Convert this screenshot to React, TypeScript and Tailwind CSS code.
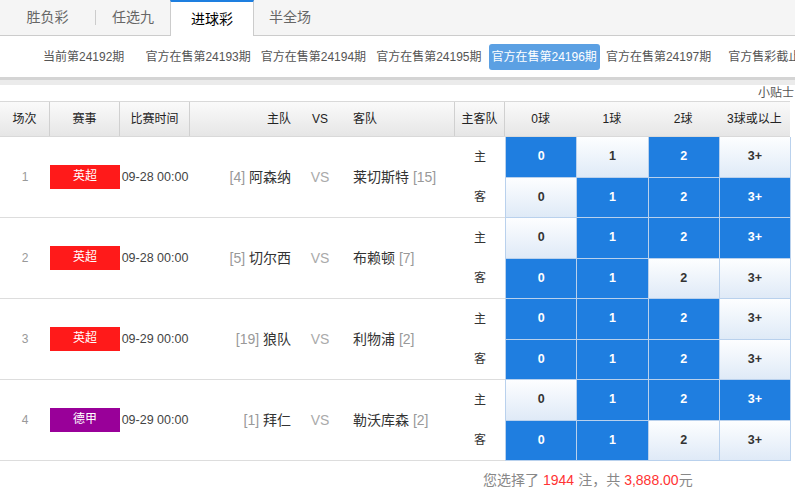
import React from 'react';

type Match = {
  no: number;
  league: string;
  leagueColor: string;
  time: string;
  homeRank: string;
  home: string;
  away: string;
  awayRank: string;
  sel: number[][];
};

const matches: Match[] = [
  { no: 1, league: '英超', leagueColor: 'bg-[#ff1a1a]', time: '09-28 00:00', homeRank: '[4]', home: '阿森纳', away: '莱切斯特', awayRank: '[15]', sel: [[1, 0, 1, 0], [0, 1, 1, 1]] },
  { no: 2, league: '英超', leagueColor: 'bg-[#ff1a1a]', time: '09-28 00:00', homeRank: '[5]', home: '切尔西', away: '布赖顿', awayRank: '[7]', sel: [[0, 1, 1, 1], [1, 1, 0, 0]] },
  { no: 3, league: '英超', leagueColor: 'bg-[#ff1a1a]', time: '09-29 00:00', homeRank: '[19]', home: '狼队', away: '利物浦', awayRank: '[2]', sel: [[1, 1, 1, 0], [1, 1, 1, 0]] },
  { no: 4, league: '德甲', leagueColor: 'bg-[#990099]', time: '09-29 00:00', homeRank: '[1]', home: '拜仁', away: '勒沃库森', awayRank: '[2]', sel: [[0, 1, 1, 1], [1, 1, 0, 0]] },
];

const periods = ['官方在售第24193期', '官方在售第24194期', '官方在售第24195期', '官方在售第24196期', '官方在售第24197期'];
const labels = ['0', '1', '2', '3+'];

const MatchRow: React.FC<{ m: Match }> = ({ m }) => (
  <div className="flex">
    <div className="flex h-[81px] w-[505px] items-center border-b border-[#ddd]">
      <div className="w-[50px] text-center text-[12px] text-[#999]">{m.no}</div>
      <div className={`flex h-[24px] w-[70px] items-center justify-center pb-[2px] text-[12px] text-white ${m.leagueColor}`}>
        {m.league}
      </div>
      <div className="w-[70px] text-center text-[12.5px] text-[#444]">{m.time}</div>
      <div className="w-[110px] pr-[9px] text-right text-[14px] text-[#333]">
        <span className="text-[#999]">{m.homeRank}</span> {m.home}
      </div>
      <div className="w-[40px] text-center text-[14px] text-[#aaa]">VS</div>
      <div className="w-[115px] pl-[13px] text-[14px] text-[#333]">
        {m.away} <span className="text-[#999]">{m.awayRank}</span>
      </div>
      <div className="flex h-full w-[50px] flex-col text-[12px] text-[#333]">
        <div className="flex flex-1 items-center justify-center">主</div>
        <div className="flex flex-1 items-center justify-center">客</div>
      </div>
    </div>
    <div className="grid h-[81px] w-[286px] grid-cols-4 grid-rows-2 gap-px bg-[#b9d1ed] px-px pb-px">
      {m.sel.map((row, r) =>
        row.map((on, c) => (
          <div
            key={`${r}-${c}`}
            className={
              on
                ? 'flex items-center justify-center bg-[#1f7ee0] text-[12.5px] font-bold text-white'
                : 'flex items-center justify-center bg-linear-to-b from-[#fdfeff] to-[#dfeaf7] text-[12.5px] font-bold text-[#333]'
            }
          >
            {labels[c]}
          </div>
        ))
      )}
    </div>
  </div>
);

export default function App() {
  return (
    <div className="w-[795px] overflow-hidden bg-white font-['Liberation_Sans','Noto_Sans_CJK_SC',sans-serif]">
      {/* tabs */}
      <div className="flex h-[36px] border-b border-[#ccc] bg-[#f5f5f5] text-[14px] text-[#666]">
        <div className="flex w-[95px] items-center justify-center">胜负彩</div>
        <div className="h-[15px] w-px self-center bg-[#ccc]" />
        <div className="flex w-[74px] items-center justify-center">任选九</div>
        <div className="flex h-[36px] w-[84px] items-center justify-center border-x border-t-2 border-[#ccc] border-t-[#1e7fe0] bg-white text-black">
          进球彩
        </div>
        <div className="flex w-[72px] items-center justify-center">半全场</div>
      </div>

      {/* periods */}
      <div className="flex h-[41px] items-center whitespace-nowrap pl-[43px] text-[12px] text-[#555]">
        <span className="mr-[21px]">当前第24192期</span>
        {periods.map((p) =>
          p === '官方在售第24196期' ? (
            <span key={p} className="mr-[6px] ml-[-3px] rounded-[3px] bg-[#5ba0e3] px-[3px] py-[4px] text-white">
              {p}
            </span>
          ) : (
            <span key={p} className="mr-[10px]">
              {p}
            </span>
          )
        )}
        <span className="mr-[9px] ml-[-2px] h-[24px] w-px bg-[#ccc]" />
        <span>官方售彩截止时间</span>
      </div>

      <div className="h-[8px] border-t-[3px] border-[#d4d4d4] bg-[#ebebeb]" />

      <div className="h-[16px] overflow-hidden whitespace-nowrap pl-[758px] text-[12px] leading-[16px] text-[#555]">
        小贴士：
      </div>

      {/* header */}
      <div className="flex h-[36px] w-[790px] border-y border-[#d9d9d9] bg-linear-to-b from-[#fafafa] to-[#e6e6e6] text-[12px] text-[#222]">
        <div className="flex w-[50px] items-center justify-center border-r border-[#d0d0d0]">场次</div>
        <div className="flex w-[70px] items-center justify-center border-r border-[#d0d0d0]">赛事</div>
        <div className="flex w-[70px] items-center justify-center border-r border-[#d0d0d0]">比赛时间</div>
        <div className="flex w-[110px] items-center justify-end pr-[9px]">主队</div>
        <div className="flex w-[40px] items-center justify-center">VS</div>
        <div className="flex w-[115px] items-center border-r border-[#d0d0d0] pl-[13px]">客队</div>
        <div className="flex w-[50px] items-center justify-center border-r border-[#d0d0d0]">主客队</div>
        <div className="grid flex-1 grid-cols-4">
          <div className="flex items-center justify-center">0球</div>
          <div className="flex items-center justify-center">1球</div>
          <div className="flex items-center justify-center">2球</div>
          <div className="flex items-center justify-center">3球或以上</div>
        </div>
      </div>

      {matches.map((m) => (
        <MatchRow key={m.no} m={m} />
      ))}

      {/* footer */}
      <div className="flex h-[38px] items-center whitespace-nowrap pl-[483px] text-[14px] text-[#888]">
        您选择了 <span className="mx-[4px] text-[#f33]">1944</span> 注，共 <span className="ml-[4px] text-[#f33]">3,888.00</span>元
      </div>
    </div>
  );
}
